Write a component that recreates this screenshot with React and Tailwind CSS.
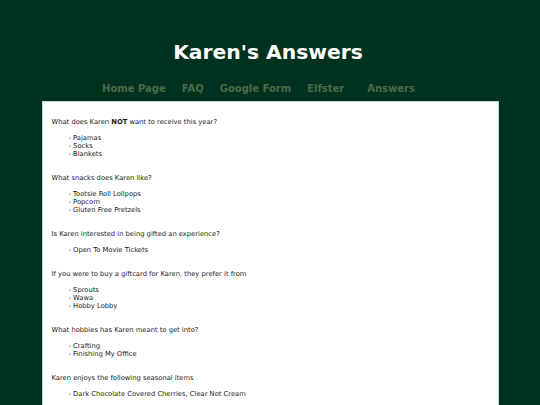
import React from 'react';

const nav = ['Home Page', 'FAQ', 'Google Form', 'Elfster'];

const questions = [
    { q: <>What does Karen <b>NOT</b> want to receive this year?</>, items: ['Pajamas', 'Socks', 'Blankets'] },
    { q: 'What snacks does Karen like?', items: ['Tootsie Roll Lollpops', 'Popcorn', 'Gluten Free Pretzels'] },
    { q: 'Is Karen interested in being gifted an experience?', items: ['Open To Movie Tickets'] },
    { q: 'If you were to buy a giftcard for Karen, they prefer it from', items: ['Sprouts', 'Wawa', 'Hobby Lobby'] },
    { q: 'What hobbies has Karen meant to get into?', items: ['Crafting', 'Finishing My Office'] },
    { q: 'Karen enjoys the following seasonal items', items: ['Dark Chocolate Covered Cherries, Clear Not Cream'] },
];

export default function App() {
    return (
        <div className="min-h-[405px] bg-[#013220] overflow-hidden" style={{ fontFamily: '"DejaVu Sans", Verdana, sans-serif' }}>

            {/* Header */}
            <h1 className="pt-[40px] pr-[4px] text-center text-white font-bold text-[20.3px] leading-[24px]">
                Karen's Answers
            </h1>

            {/* Navigation */}
            <nav className="mt-[19px] flex justify-center gap-[16px] pr-[23px] text-[10px] leading-[12px] font-bold text-[#4b6b48]">
                {nav.map((n) => (
                    <a key={n} href="#">{n}</a>
                ))}
                <a href="#" className="ml-[7px]">Answers</a>
            </nav>

            {/* Content */}
            <main className="mt-[6px] mx-auto w-[457px] bg-white border border-[#c4dccf] border-b-0 pt-[16px] pb-[20px] pl-[9px] text-[6.75px] leading-[8px] text-[#1a1a1a]">
                {questions.map((item, i) => (
                    <div key={i} className="mb-[16px]">
                        <p className="mb-[8px]">{item.q}</p>
                        <ul className="pl-[17px]">
                            {item.items.map((it) => (
                                <li key={it}>- {it}</li>
                            ))}
                        </ul>
                    </div>
                ))}
            </main>

        </div>
    );
}
